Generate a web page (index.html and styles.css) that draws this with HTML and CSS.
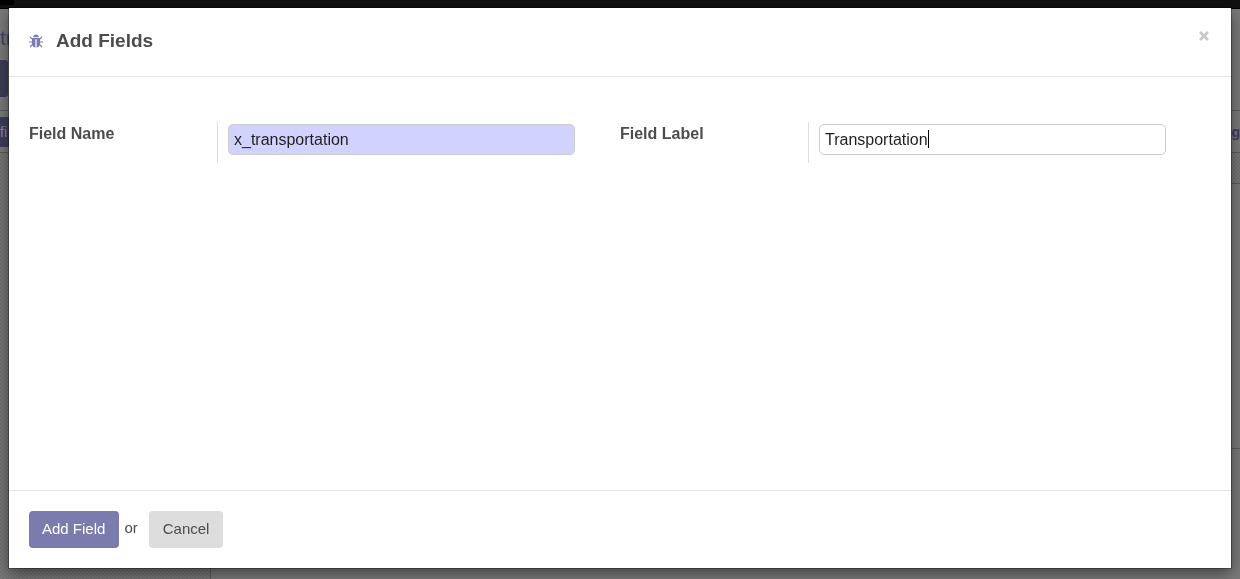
FILE: index.html
```html
<!DOCTYPE html>
<html lang="en">
<head>
<meta charset="utf-8">
<title>Add Fields</title>
<link rel="stylesheet" href="styles.css">
</head>
<body>
<div class="page" aria-hidden="true">
  <div class="topbar"><div class="topbar-active"></div></div>
  <div class="page-head">
    <span class="crumb">tr</span>
    <div class="page-button"></div>
  </div>
  <div class="page-tabs"><span class="page-tab">fi</span><span class="page-link">g</span></div>
  <div class="page-main">
    <div class="page-side"></div>
    <div class="page-content"><div class="strip"></div><div class="sheet"></div><div class="rest"></div></div>
  </div>
</div>
<div class="overlay">
  <form class="modal" role="dialog" aria-labelledby="title">
    <header class="modal-header">
      <svg class="bug" viewBox="0 0 14 14" aria-hidden="true">
        <path class="bug-fill" d="M4.2 3.2a2.8 2.7 0 0 1 5.6 0zM3 4h8v6C11 12 9.5 13.4 7.6 13.4V5.2H6.4v8.2C4.5 13.4 3 12 3 10z"/>
        <path class="bug-line" d="M3.4 5.2 1 2.8M10.6 5.2 13 2.8M3 8H0M11 8h3M3.6 10.4 1 13M10.4 10.4 13 13"/>
      </svg>
      <h1 class="title" id="title">Add Fields</h1>
      <button class="close" type="button" aria-label="Close"><svg class="close-icon" viewBox="0 0 10 10" aria-hidden="true"><path d="M1 1l8 8M9 1 1 9"/></svg></button>
    </header>
    <div class="modal-body">
      <div class="group">
        <label class="label" for="name">Field Name</label>
        <div class="cell"><input class="input required" id="name" type="text" value="x_transportation"></div>
      </div>
      <div class="group">
        <label class="label" for="label">Field Label</label>
        <div class="cell"><input class="input" id="label" type="text" value="Transportation"><span class="caret"></span></div>
      </div>
    </div>
    <footer class="modal-footer">
      <button class="btn primary" type="submit">Add Field</button>
      <span class="or">or</span>
      <button class="btn" type="button">Cancel</button>
    </footer>
  </form>
</div>
</body>
</html>
```
FILE: styles.css
```css
* { box-sizing: border-box; }
html, body { height: 100%; }
body {
  margin: 0;
  overflow: hidden;
  font-family: "Liberation Sans", Arial, sans-serif;
  font-size: 16px;
  color: #4c4c4c;
}
.page {
  display: flex;
  flex-direction: column;
  height: 100vh;
  overflow: hidden;
  background: #7b7b7b;
}
.topbar { flex: none; height: 9px; background: #111; border-bottom: 1px solid #000; }
.topbar-active { width: 14px; height: 5px; background: #000; }
.page-head { flex: none; height: 102px; padding-top: 16px; border-bottom: 1px solid #5c5c5c; }
.crumb { display: block; height: 35px; font-size: 21px; line-height: 26px; color: #3e4668; }
.page-button { width: 8px; height: 37px; border-radius: 0 3px 3px 0; background: #3e3e59; }
.page-tabs {
  display: flex;
  flex: none;
  align-items: center;
  justify-content: space-between;
  height: 42px;
  border-bottom: 1px solid #5c5c5c;
  font-size: 14px;
}
.page-tab { width: 20px; padding: 6px 0; line-height: 18px; background: #3e3e5e; color: #8a8a94; }
.page-link { font-weight: bold; color: #3e3e70; }
.page-main { display: flex; flex: 1; }
.page-side, .strip {
  background: repeating-conic-gradient(#727272 0 25%, #7a7a7a 0 50%) 0 0 / 4px 4px;
}
.page-side { width: 211px; border-right: 1px solid #5c5c5c; }
.page-content { display: flex; flex: 1; flex-direction: column; }
.strip { height: 31px; border-bottom: 1px solid #5c5c5c; }
.sheet { height: 265px; border-bottom: 1px solid #5c5c5c; }
.rest { flex: 1; }
.overlay { position: fixed; inset: 0; padding: 8px 9px 11px; }
.modal {
  display: flex;
  flex-direction: column;
  height: 100%;
  margin: 0;
  background: #fff;
  box-shadow: 0 0 0 1px rgba(0, 0, 0, .3), 0 5px 15px rgba(0, 0, 0, .5);
}
.modal-header {
  display: flex;
  align-items: center;
  padding: 20px;
  border-bottom: 1px solid #e5e5e5;
}
.bug { width: 14px; height: 14px; margin: 0 13px 2px 0; }
.bug-fill { fill: #7c7bad; }
.bug-line { fill: none; stroke: #7c7bad; stroke-width: 1.2; }
.title { flex: 1; margin: 0; padding-bottom: 2px; font-size: 19px; line-height: 26px; }
.close { align-self: flex-start; height: 18px; margin-right: 2px; padding: 0; border: 0; background: none; }
.close-icon { display: block; width: 10px; height: 10px; margin-bottom: 2px; fill: none; stroke: #c8c8c8; stroke-width: 2.6; }
.modal-body { display: flex; flex: 1; align-items: flex-start; padding: 45px 20px; }
.group { display: flex; flex: 1; padding-right: 45px; }
.label { width: 188px; padding-top: 2px; font-weight: bold; line-height: 20px; }
.cell { position: relative; flex: 1; padding: 2px 0 8px 10px; border-left: 1px solid #ddd; }
.input {
  display: block;
  width: 100%;
  height: 31px;
  padding: 0 5px;
  border: 1px solid #ccc;
  border-radius: 5px;
  background: #fff;
  color: #1f1f1f;
  font: inherit;
}
.required { background: #d2d2ff; }
.caret { position: absolute; top: 8px; left: 119px; width: 1px; height: 18px; background: #000; }
.modal-footer { display: flex; align-items: center; padding: 20px; border-top: 1px solid #e5e5e5; }
.btn {
  height: 37px;
  padding: 0 14px 2px;
  border: 0;
  border-radius: 4px;
  background: #ddd;
  color: #4c4c4c;
  font: inherit;
  font-size: 15px;
}
.primary { padding: 0 14px 2px 13px; background: #7c7bad; color: #fff; }
.or { margin: 0 11px 0 5px; padding-bottom: 4px; font-size: 15px; }
```
